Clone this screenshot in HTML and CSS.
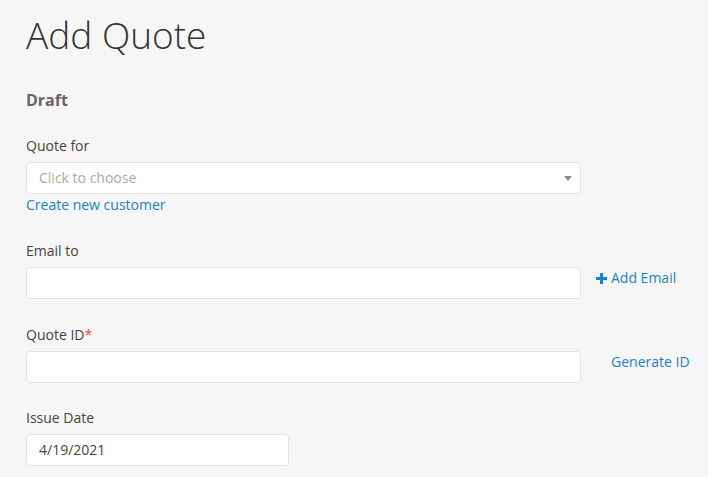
FILE: index.html
```html
<!DOCTYPE html>
<html>
    <head>
        <title>Add Quote</title>
        <link rel="stylesheet" href="styles.css">
    </head>
    <body>
        <div class="page">
            <h1 class="title">Add Quote</h1>
            <h4 class="status">Draft</h4>

            <div class="field">
                <label class="label">Quote for</label>
                <div class="row">
                    <div class="select">
                        <span class="placeholder">Click to choose</span>
                        <span class="caret"></span>
                    </div>
                </div>
                <a class="link" href="#">Create new customer</a>
            </div>

            <div class="field">
                <label class="label">Email to</label>
                <div class="row">
                    <div class="input"></div>
                    <a class="link side add" href="#">
                        <svg width="11" height="11" viewBox="0 0 11 11"><path d="M4 0h3v4h4v3H7v4H4V7H0V4h4z" fill="#1a82cc"/></svg>
                        Add Email
                    </a>
                </div>
            </div>

            <div class="field">
                <label class="label">Quote ID<span class="req">*</span></label>
                <div class="row">
                    <div class="input"></div>
                    <a class="link side gen" href="#">Generate ID</a>
                </div>
            </div>

            <div class="field">
                <label class="label">Issue Date</label>
                <div class="input date">4/19/2021</div>
            </div>
        </div>
    </body>
</html>
```

FILE: styles.css
```css
body{
    margin:0;
    background-color:#f6f6f6;
    font-family:"Open Sans", sans-serif;
    font-size:14px;
    color:#444;
}
.page{
    padding:12px 26px;
}
.title{
    margin:0;
    font-size:37px;
    font-weight:300;
    line-height:46px;
    color:#333;
}
.status{
    margin:32px 0 26px 0;
    font-size:16px;
    line-height:20px;
    font-weight:700;
    color:#666;
}
.field{
    margin-bottom:26px;
}
.field:nth-child(5){
    margin-bottom:25px;
}
.label{
    display:block;
    line-height:20px;
    margin-bottom:6px;
}
.req{
    color:#e0474c;
}
.row{
    display:flex;
    align-items:flex-start;
}
.select, .input{
    box-sizing:border-box;
    flex-shrink:0;
    width:555px;
    height:32px;
    background-color:white;
    border:1px solid #e3e3e3;
    border-radius:4px;
    padding:0 12px;
    line-height:30px;
}
.select{
    display:flex;
    justify-content:space-between;
    align-items:center;
}
.placeholder{
    color:#a9a9a9;
}
.caret{
    width:0;
    height:0;
    border-left:4px solid transparent;
    border-right:4px solid transparent;
    border-top:5px solid #888;
    margin-right:-4px;
}
.link{
    display:block;
    color:#1a82cc;
    text-decoration:none;
    line-height:20px;
    margin-top:1px;
    white-space:nowrap;
}
.side{
    margin-top:1px;
    display:flex;
    align-items:center;
    gap:4px;
}
.add{
    margin-left:15px;
}
.gen{
    margin-left:30px;
}
.date{
    width:263px;
    color:#444;
}
```
